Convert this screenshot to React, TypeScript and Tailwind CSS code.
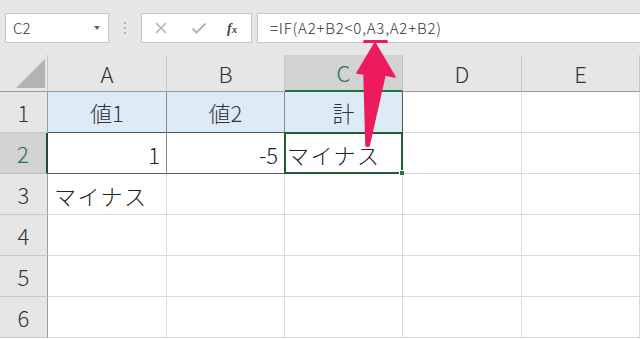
// Excel風の画面 — IF関数で「マイナス」を返す例

const cols = ["A", "B", "C", "D", "E"]

function ColHeader({ label, active }: { label: string; active?: boolean }) {
  return (
    <div
      className={
        active
          ? "flex items-center justify-center border-r border-[#bdbdbd] border-b-2 border-b-[#217346] bg-[#d2d2d2] text-[22px] text-[#217346]"
          : "flex items-center justify-center border-r border-[#c8c8c8] border-b border-b-[#9b9b9b] bg-[#e6e6e6] text-[22px] text-[#333]"
      }
    >
      {label}
    </div>
  )
}

function RowHeader({ label, active }: { label: string; active?: boolean }) {
  return (
    <div
      className={
        active
          ? "flex items-center justify-center border-b border-[#bdbdbd] border-r-2 border-r-[#1f4d33] bg-[#d2d2d2] text-[22px] text-[#217346]"
          : "flex items-center justify-center border-b border-[#c8c8c8] border-r border-r-[#9b9b9b] bg-[#e6e6e6] text-[22px] text-[#333]"
      }
    >
      {label}
    </div>
  )
}

function Empty() {
  return <div className="border-r border-b border-[#d9d9d9] bg-white" />
}

export default function App() {
  return (
    <main className="relative h-[339px] w-[640px] overflow-hidden bg-white font-['Noto_Sans_CJK_JP',sans-serif] font-light text-[#222]">
      {/* 数式バー */}
      <div className="flex h-[55px] items-start bg-[#e6e6e6] pl-[5px] pt-[13px]">
        <div className="flex h-[30px] w-[104px] items-center justify-between border border-[#c6c6c6] bg-white pl-[7px] pr-[8px] text-[15px] text-[#333]">
          <span>C2</span>
          <span className="h-0 w-0 border-x-[3.5px] border-t-[4px] border-x-transparent border-t-[#666]" />
        </div>
        <div className="flex h-[30px] w-[32px] flex-col items-center justify-center gap-[3px]">
          <span className="h-[2px] w-[2px] rounded-full bg-[#a0a0a0]" />
          <span className="h-[2px] w-[2px] rounded-full bg-[#a0a0a0]" />
          <span className="h-[2px] w-[2px] rounded-full bg-[#a0a0a0]" />
        </div>
        <div className="flex h-[30px] w-[111px] items-center border border-[#c6c6c6] bg-white">
          <svg width="12" height="12" viewBox="0 0 12 12" className="ml-[13px]">
            <path d="M1 1 L11 11 M11 1 L1 11" stroke="#b4b4b4" strokeWidth="1.6" />
          </svg>
          <svg width="16" height="12" viewBox="0 0 16 12" className="ml-[24px]">
            <path d="M1.5 6.5 L5.5 10.5 L14.5 1.5" stroke="#b4b4b4" strokeWidth="2" fill="none" />
          </svg>
          <span className="ml-[20px] font-['Liberation_Serif',serif] text-[14px] font-bold italic text-[#444]">
            f<span className="text-[11px]">x</span>
          </span>
        </div>
        <div className="ml-[5px] flex h-[30px] flex-1 items-center border border-r-0 border-[#c6c6c6] bg-white pl-[12px] text-[15px] tracking-[0.8px] text-[#333]">
          <span>
            =IF(A2+B2&lt;0,
            <span className="relative">
              A3
              <span className="absolute -left-[4px] -right-[3px] -bottom-[5px] h-[3px] rounded-full bg-[#ec1a5c]" />
            </span>
            ,A2+B2)
          </span>
        </div>
      </div>

      {/* シート */}
      <div className="grid grid-cols-[48px_119px_118px_118px_119px_1fr] grid-rows-[37px_repeat(6,41px)]">
        <div className="relative border-r border-b border-r-[#c8c8c8] border-b-[#9b9b9b] bg-[#e6e6e6]">
          <svg width="48" height="37" viewBox="0 0 48 37" className="absolute inset-0">
            <polygon points="16,33 45,4 45,33" fill="#b4b4b4" />
          </svg>
        </div>
        {cols.map((c) => (
          <ColHeader key={c} label={c} active={c === "C"} />
        ))}

        {/* 1行目 */}
        <RowHeader label="1" />
        <div className="flex items-center justify-center border-r border-b border-r-[#8a8a8a] border-b-[#595959] bg-[#ddebf7] text-[22px] text-[#333]">
          値1
        </div>
        <div className="flex items-center justify-center border-r border-b border-r-[#8a8a8a] border-b-[#595959] bg-[#ddebf7] text-[22px] text-[#333]">
          値2
        </div>
        <div className="flex items-center justify-center border-r border-b border-r-[#595959] border-b-[#595959] bg-[#ddebf7] text-[22px] text-[#333]">
          計
        </div>
        <Empty />
        <Empty />

        {/* 2行目 */}
        <RowHeader label="2" active />
        <div className="flex items-center justify-end border-r border-b border-r-[#8a8a8a] border-b-[#595959] bg-white pr-[6px] pt-[2px] text-[22px]">
          1
        </div>
        <div className="flex items-center justify-end border-r border-b border-r-[#8a8a8a] border-b-[#595959] bg-white pr-[6px] pt-[2px] text-[22px]">
          -5
        </div>
        <div className="relative flex items-center whitespace-nowrap border-r border-b border-[#595959] bg-white pl-[2px] pt-[2px] text-[22px] tracking-[1.5px]">
          マイナス
          <span className="pointer-events-none absolute -top-[1px] -left-[1px] -right-[1px] -bottom-[1px] border-2 border-[#1f5c36]" />
          <span className="absolute -right-[3px] -bottom-[3px] h-[6px] w-[6px] border border-white bg-[#217346]" />
        </div>
        <Empty />
        <Empty />

        {/* 3行目 */}
        <RowHeader label="3" />
        <div className="flex items-center whitespace-nowrap border-r border-b border-[#d9d9d9] bg-white pl-[6px] pt-[2px] text-[22px] tracking-[1.5px]">
          マイナス
        </div>
        <Empty />
        <Empty />
        <Empty />
        <Empty />

        {["4", "5", "6"].map((r) => (
          <div key={r} className="contents">
            <RowHeader label={r} />
            <Empty />
            <Empty />
            <Empty />
            <Empty />
            <Empty />
          </div>
        ))}
      </div>

      {/* 注釈の矢印 */}
      <svg
        width="640"
        height="339"
        viewBox="0 0 640 339"
        className="pointer-events-none absolute inset-0"
      >
        <polygon
          points="375,43 395,77 385,75 369,146 366,146 364,74 357,73"
          fill="#ee1a5e"
          stroke="#ee1a5e"
          strokeWidth="1.5"
          strokeLinejoin="round"
        />
      </svg>
    </main>
  )
}
